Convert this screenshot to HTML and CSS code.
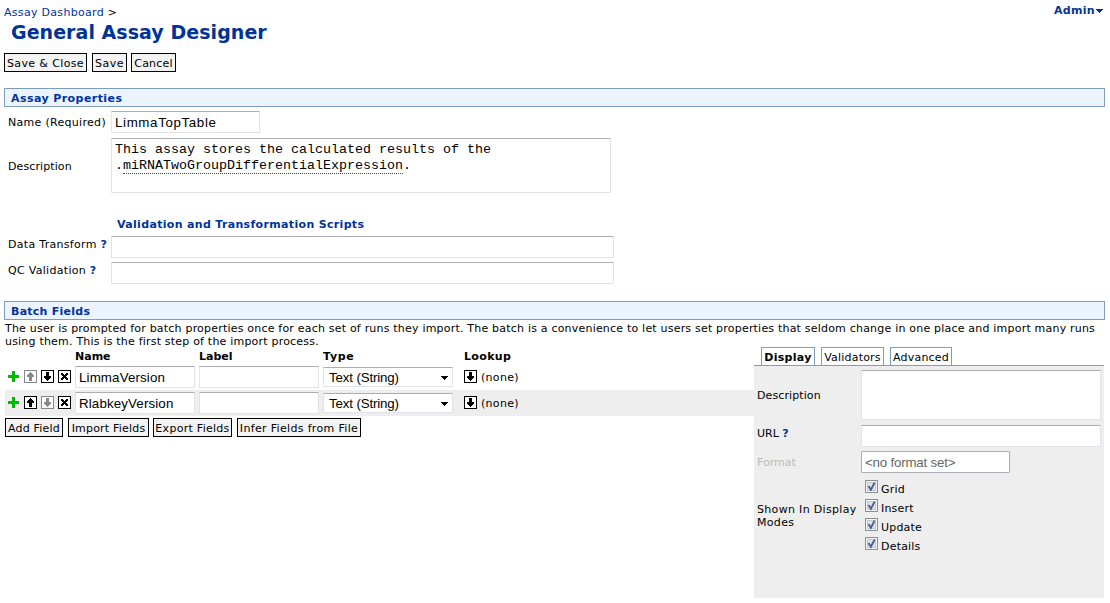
FILE: index.html
```html
<!DOCTYPE html>
<html lang="en">
<head>
<meta charset="utf-8">
<title>General Assay Designer</title>
<link rel="stylesheet" href="styles.css">
</head>
<body>
<svg class="defs" width="0" height="0">
  <symbol id="plus" viewBox="0 0 11 11"><path d="M4 0h3v4h4v3H7v4H4V7H0V4h4z" fill="#0b0"/></symbol>
  <symbol id="down" viewBox="0 0 13 13"><path d="M.5.5h12v12H.5z" fill="#fff" stroke="currentColor"/><path d="M5 2h3v4h2v2H9v1H8v1H7v1H6v-1H5V9H4V8H3V6h2z" fill="currentColor"/></symbol>
  <symbol id="up" viewBox="0 0 13 13"><path d="M.5.5h12v12H.5z" fill="#fff" stroke="currentColor"/><path d="M6 2h1v1h1v1h1v1h1v2H8v4H5V7H3V5h1V4h1V3h1z" fill="currentColor"/></symbol>
  <symbol id="close" viewBox="0 0 13 13"><path d="M.5.5h12v12H.5z" fill="#fff" stroke="currentColor"/><path d="M3 3h2v1h1v1h1V4h1V3h2v2H9v1H8v1h1v1h1v2H8V9H7V8H6v1H5v1H3V8h1V7h1V6H4V5H3z" fill="currentColor"/></symbol>
  <symbol id="caret" viewBox="0 0 7 4"><path d="M0 0h7v1H6v1H5v1H4v1H3V3H2V2H1V1H0z" fill="currentColor"/></symbol>
  <symbol id="check" viewBox="0 0 13 13"><path d="M.5.5h12v12H.5z" fill="#f4f4f4" stroke="#8e8f8f"/><path d="M2.5 2.5h8v8h-8z" fill="#dfe2e8" stroke="#c4c9d0"/><path d="M3.5 6l2.4 3.8L9.6 2.6" fill="none" stroke="#4a5f97" stroke-width="1.9" shape-rendering="geometricPrecision"/></symbol>
</svg>
<header class="top">
  <div class="crumbs"><a>Assay Dashboard</a> &gt;</div>
  <div class="admin"><span>Admin</span><svg width="7" height="4"><use href="#caret"/></svg></div>
</header>
<h1 class="title"><span>General Assay Designer</span></h1>
<div class="toolbar">
  <button class="btn w83">Save &amp; Close</button><button class="btn w35">Save</button><button class="btn w45">Cancel</button>
</div>
<h2 class="bar wide">Assay Properties</h2>
<section class="props">
  <div class="prop name"><label>Name (Required)</label><div class="field">LimmaTopTable</div></div>
  <div class="prop desc"><label>Description</label><div class="field">This assay stores the calculated results of the<br>.<span class="spell">miRNATwoGroupDifferentialExpression</span>.</div></div>
  <h3 class="sub">Validation and Transformation Scripts</h3>
  <div class="prop script"><label>Data Transform <b>?</b></label><div class="field"></div></div>
  <div class="prop script"><label>QC Validation <b>?</b></label><div class="field"></div></div>
</section>
<h2 class="bar">Batch Fields</h2>
<p class="intro">The user is prompted for batch properties once for each set of runs they import. The batch is a convenience to let users set properties that seldom change in one place and import many runs<br>using them. This is the first step of the import process.</p>
<main class="batch">
  <div class="fields">
    <div class="row head"><span></span><b>Name</b><b>Label</b><b class="type">Type</b><b class="look">Lookup</b></div>
    <div class="row">
      <div class="icons"><svg class="plus"><use href="#plus"/></svg><svg class="off"><use href="#up"/></svg><svg><use href="#down"/></svg><svg><use href="#close"/></svg></div>
      <div class="field">LimmaVersion</div><div class="field"></div>
      <div class="field select"><span>Text (String)</span><svg class="caret"><use href="#caret"/></svg></div>
      <div class="lookup"><svg><use href="#down"/></svg><span>(none)</span></div>
    </div>
    <div class="row alt">
      <div class="icons"><svg class="plus"><use href="#plus"/></svg><svg><use href="#up"/></svg><svg class="off"><use href="#down"/></svg><svg><use href="#close"/></svg></div>
      <div class="field">RlabkeyVersion</div><div class="field"></div>
      <div class="field select"><span>Text (String)</span><svg class="caret"><use href="#caret"/></svg></div>
      <div class="lookup"><svg><use href="#down"/></svg><span>(none)</span></div>
    </div>
    <div class="actions"><button class="btn w58">Add Field</button><button class="btn w81">Import Fields</button><button class="btn w79">Export Fields</button><button class="btn w124">Infer Fields from File</button></div>
  </div>
  <aside class="side">
    <nav class="tabs"><span class="tab active">Display</span><span class="tab t2">Validators</span><span class="tab t3">Advanced</span></nav>
    <div class="panel">
      <label>Description</label><div class="field"></div>
      <label class="url">URL <b>?</b></label><div class="field"></div>
      <label class="dim">Format</label><div class="field format">&lt;no format set&gt;</div>
      <label class="modes-label">Shown In Display Modes</label>
      <div class="modes">
        <div><svg><use href="#check"/></svg><span>Grid</span></div>
        <div><svg><use href="#check"/></svg><span>Insert</span></div>
        <div><svg><use href="#check"/></svg><span>Update</span></div>
        <div><svg><use href="#check"/></svg><span>Details</span></div>
      </div>
    </div>
  </aside>
</main>
</body>
</html>
```
FILE: styles.css
```css
* { box-sizing: border-box; }
body {
  margin: 0;
  padding: 5px 5px 0 4px;
  width: 1110px;
  height: 603px;
  overflow: hidden;
  background: #fff;
  color: #000;
  font: 11px/13px Verdana, "DejaVu Sans", sans-serif;
}
svg { display: block; width: 13px; height: 13px; flex: none; shape-rendering: crispEdges; }
svg.defs { position: absolute; width: 0; height: 0; }
h1, h2, h3, p { margin: 0; }
label b, .crumbs a { color: #039; }
.top { display: flex; justify-content: space-between; height: 14px; }
.crumbs { padding-top: 1px; letter-spacing: .3px; }
.admin { display: flex; gap: 1px; padding: 0 2px 0 0; color: #039; font-weight: bold; line-height: 11px; letter-spacing: .3px; }
.admin svg { width: 7px; height: 4px; margin-top: 4px; }
.title { height: 34px; padding-left: 7px; font-size: 19px; line-height: 26px; letter-spacing: .05px; color: #039; white-space: nowrap; }
.toolbar { display: flex; height: 35px; }
.btn {
  height: 19px;
  padding: 1px 0 0;
  border: 1px solid #000;
  border-radius: 0;
  background: #f3f3f3;
  color: #000;
  font: inherit;
  line-height: 17px;
  text-align: center;
  white-space: nowrap;
}
.w83 { width: 83px; margin-right: 5px; letter-spacing: .37px; }
.w35 { width: 35px; margin-right: 4px; letter-spacing: .45px; }
.w45 { width: 45px; letter-spacing: .2px; }
.w58 { width: 58px; margin-right: 5px; letter-spacing: .2px; }
.w81 { width: 81px; margin-right: 4px; letter-spacing: .2px; }
.w79 { width: 79px; margin-right: 5px; letter-spacing: .28px; }
.w124 { width: 124px; letter-spacing: .33px; }
.bar {
  height: 19px;
  padding-left: 6px;
  border: 1px solid #7f9db9;
  background: #ebf3ff;
  color: #039;
  font-size: 11px;
  line-height: 19px;
  letter-spacing: .25px;
}
.wide { letter-spacing: .43px; }
.props { height: 194px; padding: 4px 0 0 4px; }
.prop { display: grid; grid-template-columns: 103px auto; justify-content: start; }
.prop label { white-space: nowrap; letter-spacing: .3px; }
.field {
  height: 22px;
  padding: 0 3px;
  border: 1px solid #e2e3ea;
  border-top-color: #abadb3;
  border-radius: 1px;
  background: #fff;
  font: 13.33px/21px Arial, "Liberation Sans", sans-serif;
  white-space: nowrap;
}
.name { height: 27px; }
.name label { padding-top: 5px; }
.name .field { width: 149px; letter-spacing: .63px; }
.desc { height: 55px; }
.desc label { padding-top: 22px; letter-spacing: .1px; }
.desc .field { width: 500px; height: 55px; padding-top: 3px; font: 13.33px/16px "Courier New", "Liberation Mono", monospace; }
.spell { padding-bottom: 0; border-bottom: 1px dotted #e00; line-height: 14px; }
.sub { height: 43px; padding: 25px 0 0 109px; color: #039; font-size: 11px; line-height: 13px; letter-spacing: .33px; }
.script { height: 26px; }
.script label { padding-top: 2px; }
.script .field { width: 503px; }
.intro { height: 27px; padding: 2px 0 0 1px; letter-spacing: .203px; white-space: nowrap; }
.batch { display: flex; }
.fields { width: 750px; padding: 1px 0 0 1px; }
.row { display: grid; grid-template-columns: 70px 124px 124px 141px auto; height: 26px; padding-top: 2px; }
.head { height: 16px; padding-top: 2px; }
.type { letter-spacing: .7px; }
.look { letter-spacing: .35px; }
.alt { background: #eee; }
.row .field { width: 120px; letter-spacing: .13px; }
.row .select { display: flex; justify-content: space-between; width: 130px; height: 20px; margin-top: 1px; padding: 0 4px 0 5px; line-height: 19px; letter-spacing: -.15px; }
.select .caret { width: 7px; height: 4px; margin-top: 8px; }
.icons { display: flex; padding: 4px 0 0 3px; gap: 4px; }
.icons .plus { width: 11px; height: 11px; margin: 1px 1px 0 0; }
.off { color: #888; }
.lookup { display: flex; gap: 4px; padding-top: 4px; letter-spacing: .3px; }
.lookup span { padding-top: 1px; }
.actions { display: flex; padding-top: 2px; }
.side { width: 350px; }
.tabs { display: flex; gap: 6px; height: 18px; padding-left: 7px; }
.tab { height: 18px; width: 54px; padding-top: 1px; border: 1px solid #7f9db9; border-bottom: 0; line-height: 18px; letter-spacing: .2px; text-align: center; white-space: nowrap; }
.active { font-weight: bold; letter-spacing: .3px; }
.t2 { width: 63px; }
.t3 { width: 62px; }
.panel {
  display: grid;
  grid-template: 55px 26px 26px 102px / 104px 240px;
  height: 233px;
  padding: 4px 0 0 3px;
  border-top: 1px solid #7f9db9;
  background: #eee;
}
.panel label { padding-top: 2px; }
.panel label:first-child { padding-top: 19px; letter-spacing: .1px; }
.panel .field:nth-child(2) { height: 50px; }
.panel .format { width: 149px; border: 1px solid #abadb3; color: #666; letter-spacing: -.2px; }
.panel .dim { padding-top: 5px; color: #bbb; }
.panel .modes-label { padding-top: 26px; letter-spacing: .32px; }
.modes { padding: 3px 0 0 4px; }
.modes div { display: flex; gap: 3px; height: 19px; }
.modes span { padding-top: 3px; letter-spacing: .2px; }
```
